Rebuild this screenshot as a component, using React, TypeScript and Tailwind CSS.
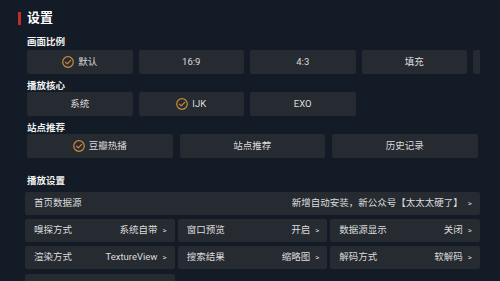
import React from "react";

const Check = () => (
  <svg width="12" height="12" viewBox="0 0 12 12" className="shrink-0">
    <circle cx="6" cy="6" r="5.3" fill="none" stroke="#c98b3c" strokeWidth="1.2" />
    <path d="M3.4 6.1 L5.3 7.9 L8.7 4.3" fill="none" stroke="#c98b3c" strokeWidth="1.2" strokeLinecap="round" strokeLinejoin="round" />
  </svg>
);

const Btn = ({ text, checked, w }: { text: string; checked?: boolean; w: string }) => (
  <div className={`${w} h-[24px] shrink-0 rounded-[2px] bg-[#262a31] flex items-center justify-center gap-[4px] text-[9.5px] text-[#dcdcdc]`}>
    {checked && <Check />}
    {text && <span>{text}</span>}
  </div>
);

const Label = ({ text, cls }: { text: string; cls: string }) => (
  <div className={`pl-[27px] text-[9.5px] leading-[12px] font-bold text-[#f0f0f0] ${cls}`}>{text}</div>
);

const Cell = ({ k, v, cls = "" }: { k: string; v?: string; cls?: string }) => (
  <div className={`h-[23px] rounded-[2px] bg-[#262a31] flex items-center justify-between pl-[9px] pr-[8px] text-[9.5px] text-[#dcdcdc] ${cls}`}>
    <span>{k}</span>
    {v !== undefined && (
      <span className="flex items-center gap-[5px]">
        <span>{v}</span>
        <span className="text-[8px]">&gt;</span>
      </span>
    )}
  </div>
);

export default function App() {
  return (
    <div
      className="w-[500px] h-[281px] overflow-hidden bg-[#131b26]"
      style={{ fontFamily: "Roboto, 'Noto Sans CJK SC', sans-serif" }}
    >
      <div className="pl-[18px] pt-[11px] flex items-center gap-[6px]">
        <div className="w-[3px] h-[13px] bg-[#c62a2a]" />
        <div className="text-[13px] leading-[14px] font-bold text-white">设置</div>
      </div>
      <Label text="画面比例" cls="mt-[11px]" />
      <div className="mt-[2px] pl-[27px] pr-[20px]">
        <div className="overflow-hidden">
          <div className="flex gap-[6px]">
            <Btn text="默认" checked w="w-[105.5px]" />
            <Btn text="16:9" w="w-[105.5px]" />
            <Btn text="4:3" w="w-[105.5px]" />
            <Btn text="填充" w="w-[105.5px]" />
            <Btn text="" w="w-[105.5px]" />
          </div>
        </div>
      </div>
      <Label text="播放核心" cls="mt-[6px]" />
      <div className="pl-[27px] flex gap-[6px]">
        <Btn text="系统" w="w-[105.5px]" />
        <Btn text="IJK" checked w="w-[105.5px]" />
        <Btn text="EXO" w="w-[105.5px]" />
      </div>
      <Label text="站点推荐" cls="mt-[6px]" />
      <div className="pl-[27px] flex gap-[7px]">
        <Btn text="豆瓣热播" checked w="w-[145.5px]" />
        <Btn text="站点推荐" w="w-[145.5px]" />
        <Btn text="历史记录" w="w-[145.5px]" />
      </div>
      <Label text="播放设置" cls="mt-[17px]" />
      <div className="mt-[5px] pl-[25px] pr-[20px] flex flex-col gap-[4px]">
        <Cell k="首页数据源" v="新增自动安装，新公众号【太太太硬了】" />
        <div className="grid grid-cols-3 gap-x-[3px] gap-y-[4px]">
          <Cell k="嗅探方式" v="系统自带" />
          <Cell k="窗口预览" v="开启" />
          <Cell k="数据源显示" v="关闭" />
          <Cell k="渲染方式" v="TextureView" />
          <Cell k="搜索结果" v="缩略图" />
          <Cell k="解码方式" v="软解码" />
          <Cell k="" cls="mt-[1px]" />
        </div>
      </div>
    </div>
  );
}
